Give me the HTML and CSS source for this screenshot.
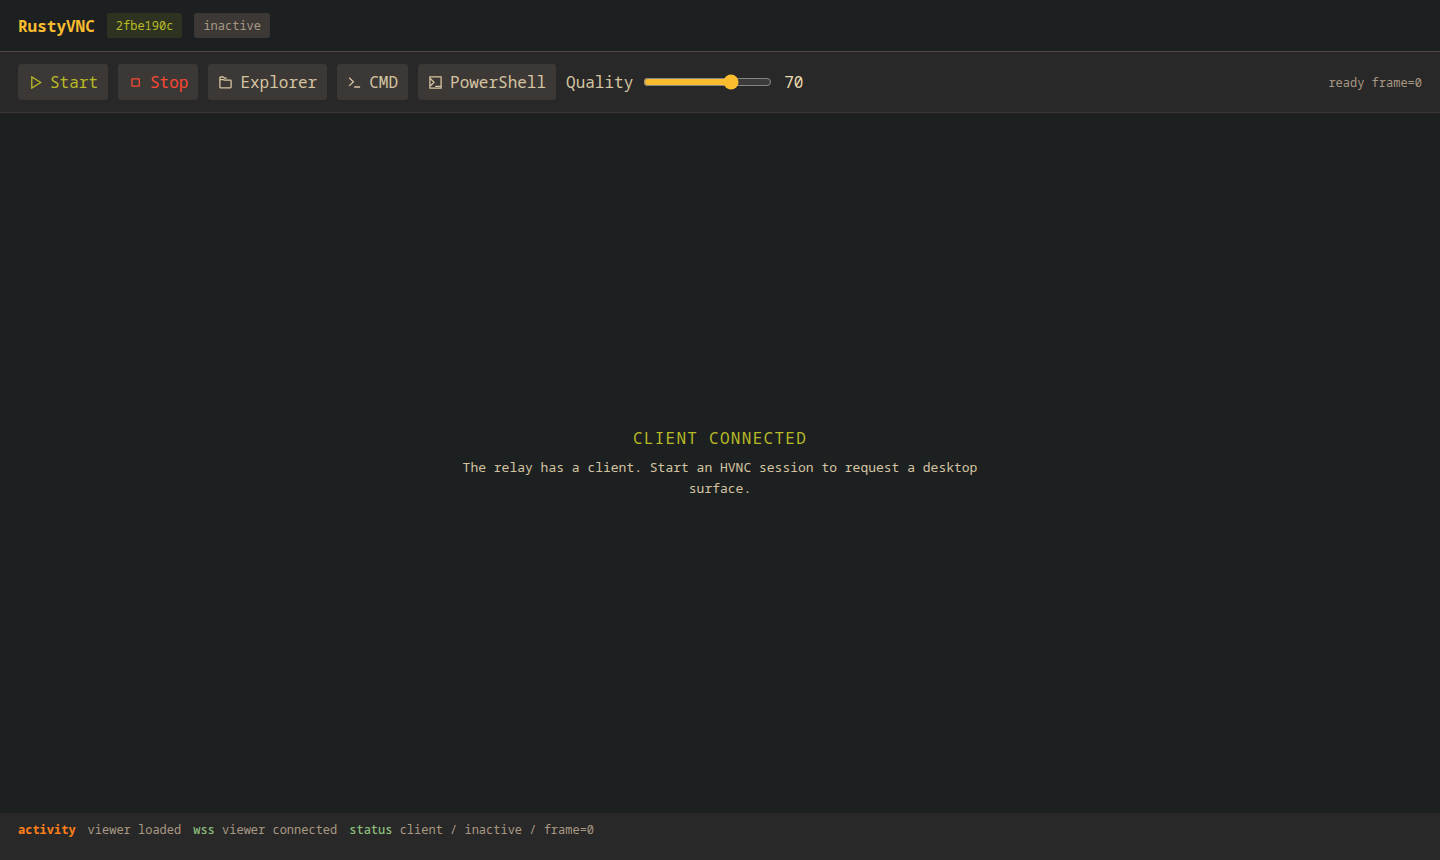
FILE: index.html
```
<!DOCTYPE html>
<html lang="en">
<head>
  <meta charset="UTF-8">
  <title>RustyVNC</title>
  <link rel="stylesheet" href="styles.css">
</head>
<body>
  <header class="topbar">
    <strong class="brand">RustyVNC</strong>
    <span class="pill ok">2fbe190c</span>
    <span class="pill">inactive</span>
  </header>

  <div class="toolbar">
    <button class="btn start">
      <svg class="icon" viewBox="0 0 15 15"><path d="M3.800 2v11l8.800-5.500z"/></svg>
      Start
    </button>
    <button class="btn stop">
      <svg class="icon" viewBox="0 0 15 15"><rect x="3.900" y="3.800" width="7.400" height="7.400" rx=".4"/></svg>
      Stop
    </button>
    <button class="btn">
      <svg class="icon" viewBox="0 0 15 15"><path d="M1.900 4.600V2.600q0-.6.6-.6h2.700l1.600 1.200h2M1.900 4.600h3.200l1.600.6h5.700q.7 0 .7.700v6.200q0 .8-.8.800H2.700q-.8 0-.8-.8z"/></svg>
      Explorer
    </button>
    <button class="btn">
      <svg class="icon" viewBox="0 0 15 15"><path d="M2.200 2.700l4.200 4.100-4.200 4.100M7.200 12h5.900"/></svg>
      CMD
    </button>
    <button class="btn">
      <svg class="icon" viewBox="0 0 15 15"><path d="M1.900 1.900h11.200v11.200H1.900zM2.400 3.800l3.700 3.500-3.700 3.500M7.200 11.300h5.400"/></svg>
      PowerShell
    </button>
    <label class="quality">Quality <input id="quality" type="range" min="10" max="95" value="70"> <span id="quality-value">70</span></label>
    <span class="state">ready frame=0</span>
  </div>

  <main class="stage">
    <div class="empty">
      <div class="empty-title">CLIENT CONNECTED</div>
      <p>The relay has a client. Start an HVNC session to request a desktop surface.</p>
    </div>
  </main>

  <footer class="log">
    <strong>activity</strong>
    <span>viewer loaded</span>
    <span><b>wss</b> viewer connected</span>
    <span><b>status</b> client / inactive / frame=0</span>
  </footer>
</body>
</html>
```
FILE: styles.css
```
* {
  box-sizing: border-box;
}

body {
  margin: 0;
  height: 100vh;
  display: flex;
  flex-direction: column;
  background: #1d2021;
  color: #d5c4a1;
  font: 16px/1.5 "Noto Sans Mono", "Noto Sans Mono CJK SC", monospace;
}
.topbar {
  height: 52px;
  display: flex;
  align-items: center;
  gap: 12px;
  padding: 0 18px;
  border-bottom: 1px solid #504945;
}
.brand {
  color: #fabd2f;
}
.pill {
  padding: 4px 9px 3px;
  border-radius: 3px;
  background: #3c3836;
  color: #a89984;
  font-size: 12px;
}
.toolbar {
  height: 61px;
  display: flex;
  align-items: center;
  gap: 10px;
  padding: 0 18px;
  background: #282828;
  border-bottom: 1px solid #3c3836;
}
.pill.ok {
  background: #2e3321;
  color: #b8bb26;
}
.btn {
  height: 36px;
  display: flex;
  align-items: center;
  gap: 7px;
  padding: 0 10px;
  border: 0;
  border-radius: 3px;
  background: #3c3836;
  color: #d5c4a1;
  font: inherit;
}
.start {
  color: #b8bb26;
}
.stop {
  color: #fb4934;
}
.icon {
  width: 15px;
  height: 15px;
  fill: none;
  stroke: currentColor;
  stroke-width: 1.3;
}
.quality {
  display: flex;
  align-items: center;
  gap: 10px;
}
.quality input {
  width: 129px;
  margin: 0;
  accent-color: #fabd2f;
}
.quality span {
  margin-left: 2px;
  color: #ebdbb2;
}
.state {
  margin-left: auto;
  padding-top: 1px;
  color: #a89984;
  font-size: 12px;
}
.stage {
  flex: 1;
  display: grid;
  place-items: center;
}
.empty {
  width: 520px;
  text-align: center;
  font-size: 13px;
}
.empty-title {
  color: #b8bb26;
  font-size: 16px;
  letter-spacing: .08em;
}
.empty p {
  margin: 7px 0 1px;
  line-height: 21px;
}
.log {
  height: 47px;
  display: flex;
  gap: 12px;
  padding: 8px 18px;
  background: #282828;
  color: #a89984;
  font-size: 12px;
}
.log strong {
  color: #fe8019;
}
.log b {
  color: #8ec07c;
  font-weight: 500;
}
```
